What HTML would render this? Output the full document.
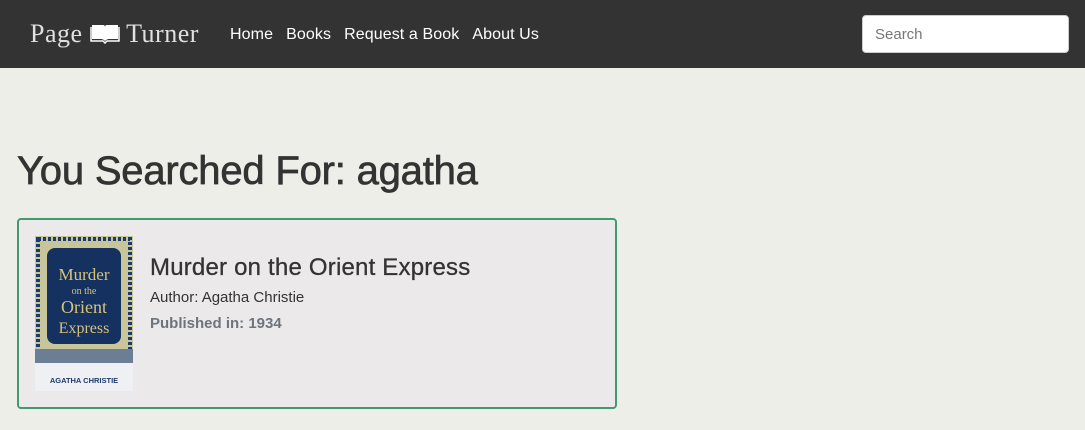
<!DOCTYPE html>
<html><head><style>
*{margin:0;padding:0;box-sizing:border-box}
body{width:1085px;height:430px;background:#eeeee9;font-family:"Liberation Sans",sans-serif;color:#333;overflow:hidden;position:relative}
.nav{position:absolute;left:0;top:0;width:1085px;height:68px;background:#333333}
.logo{position:absolute;left:30px;top:19px;color:#e0e0e0;font-family:"Liberation Serif",serif;font-size:26px;letter-spacing:0.5px}
.links{position:absolute;left:230px;top:26px;color:#fff;font-size:16px;letter-spacing:0.1px}
.links span{margin-right:13px}
.search{position:absolute;left:862px;top:15px;width:207px;height:38px;background:#fff;border:1px solid #ccc;border-radius:4px;padding:10px 12px;font-size:15px;color:#777}
h1{position:absolute;left:17px;top:149px;font-size:40px;font-weight:normal;-webkit-text-stroke:0.7px #333;color:#333;letter-spacing:-0.2px}
.card{position:absolute;left:17px;top:218px;width:600px;height:191px;background:#ebe9ea;border:2px solid #3f9c6e;border-radius:4px}
.cover{position:absolute;left:16px;top:16px;width:98px;height:155px;background:#fff}
.t{position:absolute;left:131px;top:34px;font-size:24px;color:#333;letter-spacing:0.2px;-webkit-text-stroke:0.3px #333}
.a{position:absolute;left:131px;top:69px;font-size:15px;color:#333}
.p{position:absolute;left:131px;top:95px;font-size:15px;color:#6c757d;font-weight:bold}
</style></head><body>
<div class="nav">
<div class="logo">Page <svg width="30" height="22" viewBox="0 0 30 22" style="vertical-align:-2px"><path d="M2 3h11q2 0 2 2v14q-2-2-4-2H2z M28 3H17q-2 0-2 2v14q2-2 4-2h9z" fill="#fff"/><path d="M1 5v14h12l2 2 2-2h12V5" fill="none" stroke="#fff" stroke-width="1.5"/></svg> Turner</div>
<div class="links"><span>Home</span><span>Books</span><span>Request a Book</span><span>About Us</span></div>
<div class="search">Search</div>
</div>
<h1>You Searched For: agatha</h1>
<div class="card">
<div class="cover">
<svg width="98" height="155" viewBox="0 0 98 155">
<rect x="0" y="0" width="98" height="118" fill="#c9c59a"/>
<rect x="3" y="3" width="92" height="112" fill="none" stroke="#1d3a6e" stroke-width="4" stroke-dasharray="3 2"/>
<rect x="12" y="12" width="74" height="96" rx="8" fill="#14315f"/>
<text x="49" y="44" text-anchor="middle" font-family="Liberation Serif" font-size="17" fill="#d9c27a">Murder</text>
<text x="49" y="58" text-anchor="middle" font-family="Liberation Serif" font-size="10" fill="#d9c27a">on the</text>
<text x="49" y="77" text-anchor="middle" font-family="Liberation Serif" font-size="18" fill="#d9c27a">Orient</text>
<text x="49" y="97" text-anchor="middle" font-family="Liberation Serif" font-size="16" fill="#d9c27a">Express</text>
<rect x="0" y="113" width="98" height="14" fill="#6b7e93"/>
<rect x="0" y="127" width="98" height="28" fill="#eef0f3"/>
<text x="49" y="147" text-anchor="middle" font-size="7.5" font-weight="bold" fill="#1d3a6e">AGATHA CHRISTIE</text>
</svg>
</div>
<div class="t">Murder on the Orient Express</div>
<div class="a">Author: Agatha Christie</div>
<div class="p">Published in: 1934</div>
</div>
</body></html>
